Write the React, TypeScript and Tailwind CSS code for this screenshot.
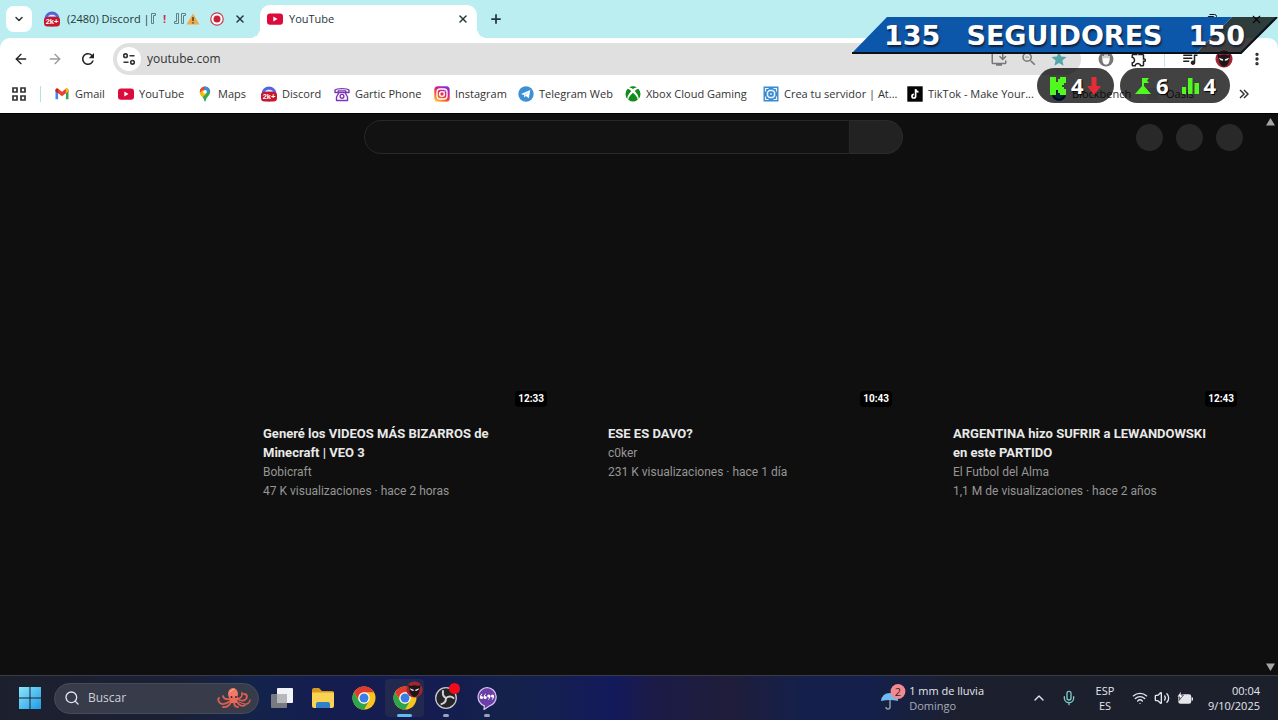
import React from 'react';
import {
  ArrowLeft,
  ArrowRight,
  ChevronDown,
  ChevronUp,
  EllipsisVertical,
  Mic,
  Plus,
  Search,
  Volume2,
  Wifi,
  X,
} from 'lucide-react';
import { MdInstallDesktop, MdOutlineExtension, MdQueueMusic, MdRefresh, MdStar, MdZoomOut } from 'react-icons/md';

const DiscordIcon = () => (
  <svg viewBox="0 0 16 16" className="size-4 shrink-0" aria-hidden="true">
    <circle cx="8" cy="8" r="7.6" fill="#5a62d8" />
    <path d="M4 5.500c1-2.200 7-2.200 8 0z" fill="#e6e8ff" />
    <rect y="6" width="16" height="9.6" rx="3.5" fill="#c9162b" />
    <text x="8" y="13.4" textAnchor="middle" fontSize="7.5" fontWeight="700" fill="#fff" fontFamily="Liberation Sans, sans-serif">
      2k+
    </text>
  </svg>
);

const YouTubeIcon = () => (
  <svg viewBox="0 0 16 16" className="size-4 shrink-0" aria-hidden="true">
    <rect y="2.4" width="16" height="11.4" rx="3" fill="#dd0a3c" />
    <path d="M6.3 5.6v5l4.2-2.5z" fill="#fff" />
  </svg>
);

const GmailIcon = () => (
  <svg viewBox="0 0 16 16" className="size-4 shrink-0" aria-hidden="true">
    <path d="M1.500 4v9.300h2.600V6z" fill="#4285f4" />
    <path d="M14.500 4v9.300h-2.600V6z" fill="#34a853" />
    <path d="M1.500 4c0-1.500 1.700-2 2.700-1.200L8 5.700l3.800-2.900c1-.8 2.700-.3 2.700 1.200v1.300L8 10.200 1.500 5.300z" fill="#ea4335" />
    <path d="M11.900 2.800c1-.8 2.600-.3 2.600 1.200v1.300l-2.600 2z" fill="#fbbc04" />
    <path d="M1.500 4.200c0-1 1-1.700 2-1.600l.6.300v4.400L1.500 5.300z" fill="#c5221f" />
  </svg>
);

const MapsIcon = () => (
  <svg viewBox="0 0 16 16" className="size-4 shrink-0" aria-hidden="true">
    <defs>
      <clipPath id="pin">
        <path d="M8 .6a5.200 5.200 0 0 0-5.200 5.200c0 3.600 3.600 4.800 4.400 8.700.2 1.200 1.400 1.200 1.600 0 .8-3.900 4.400-5.100 4.400-8.700A5.200 5.200 0 0 0 8 .6z" />
      </clipPath>
    </defs>
    <g clipPath="url(#pin)">
      <rect width="16" height="16" fill="#34a853" />
      <path d="M0 0h8l-1 5-5 4H0z" fill="#ea4335" />
      <path d="M7 0h9v5L8 6z" fill="#4285f4" />
      <path d="M1 8l5-4 3 4-5 5z" fill="#fbbc04" />
    </g>
    <circle cx="8" cy="5.800" r="1.900" fill="#fff" />
  </svg>
);

const GarticIcon = () => (
  <svg viewBox="0 0 16 16" className="size-4 shrink-0" fill="none" stroke="#7b35b5" strokeWidth="1.400" strokeLinejoin="round" aria-hidden="true">
    <path d="M1 6.500V4.300C3 2 13 2 15 4.300v2.200h-3.200V4.900H4.200v1.600z" />
    <path d="M5 6.500h6l2.500 4.500v3.500h-11V11z" />
    <circle cx="8" cy="10.300" r="1.900" />
  </svg>
);

const InstagramIcon = () => (
  <svg viewBox="0 0 16 16" className="size-4 shrink-0" aria-hidden="true">
    <defs>
      <linearGradient id="insta" x1="0.200" y1="1" x2="0.800" y2="0">
        <stop offset="0" stopColor="#ffc53d" />
        <stop offset="0.350" stopColor="#f5502f" />
        <stop offset="0.650" stopColor="#d0208b" />
        <stop offset="1" stopColor="#7a2ee0" />
      </linearGradient>
    </defs>
    <rect x="0.300" y="0.300" width="15.400" height="15.400" rx="3.500" fill="url(#insta)" />
    <g fill="none" stroke="#fff" strokeWidth="1.300">
      <rect x="3" y="3" width="10" height="10" rx="3" />
      <circle cx="8" cy="8" r="2.400" />
    </g>
    <circle cx="10.900" cy="5.100" r="0.700" fill="#fff" />
  </svg>
);

const TelegramIcon = () => (
  <svg viewBox="0 0 16 16" className="size-4 shrink-0" aria-hidden="true">
    <circle cx="8" cy="8" r="7.700" fill="#3d8fd6" />
    <path d="M3 7.900l9.300-3.800-1.500 8.200-3-2.200-1.500 1.500-.3-2.500z" fill="#fff" />
    <path d="M6 9.100l4.800-3.500-3.700 4.200z" fill="#b5d5f0" />
  </svg>
);

const XboxIcon = () => (
  <svg viewBox="0 0 16 16" className="size-4 shrink-0" aria-hidden="true">
    <g fill="#138a1c">
      <path d="M4 1.600C5.300.7 6.600.3 8 .3s2.700.4 4 1.300c-1.300-.3-2.700.3-4 1.300-1.300-1-2.700-1.600-4-1.300z" />
      <path d="M2.700 2.700c1 0 2.300.9 3.600 2.400C3.900 7.600 2.200 10.600 2.300 13A7.700 7.700 0 0 1 2.700 2.700z" />
      <path d="M13.300 2.700c-1 0-2.300.9-3.600 2.400 2.400 2.500 4.100 5.500 4 7.900a7.700 7.700 0 0 0-.4-10.300z" />
      <path d="M8 6.700c2.600 2 4.600 5 4.700 7a7.600 7.600 0 0 1-9.400 0c.1-2 2.100-5 4.700-7z" />
    </g>
  </svg>
);

const AternosIcon = () => (
  <svg viewBox="0 0 16 16" className="size-4 shrink-0" aria-hidden="true">
    <rect x="0.500" y="0.500" width="15" height="15" fill="#3c8bd0" />
    <g fill="none" stroke="#e9f4ff">
      <path d="M5.500 2.500h-3v3M10.500 2.500h3v3M5.500 13.500h-3v-3M10.500 13.500h3v-3" strokeWidth="1.200" />
      <path d="M6.300 4.500h3.400l1.800 1.800v3.400l-1.800 1.800H6.300L4.500 9.700V6.300z" strokeWidth="1.500" />
    </g>
    <rect x="7" y="7" width="2" height="2" fill="#a9d0f2" />
  </svg>
);

const TikTokIcon = () => (
  <svg viewBox="0 0 16 16" className="size-4 shrink-0" aria-hidden="true">
    <rect x="0.300" y="0.300" width="15.400" height="15.400" fill="#050505" />
    <path d="M8.600 3v7.200a1.800 1.800 0 1 1-1.800-1.800M8.600 3.200c.2 1.600 1.300 2.600 2.900 2.700" fill="none" stroke="#fff" strokeWidth="1.700" />
  </svg>
);

const BlockbenchIcon = () => (
  <svg viewBox="0 0 16 16" className="size-4 shrink-0" aria-hidden="true">
    <circle cx="8" cy="8" r="7" fill="#0c2b78" />
    <path d="M4 6l4-2 4 2v5l-4 2-4-2z" fill="#1e93d9" />
  </svg>
);

const OasisIcon = () => (
  <svg viewBox="0 0 16 16" className="size-4 shrink-0" aria-hidden="true">
    <rect x="2" y="2" width="12" height="12" rx="3" fill="#e5e7e9" />
  </svg>
);

const ChromeIcon = () => (
  <svg viewBox="0 0 24 24" className="size-6 shrink-0" aria-hidden="true">
    <circle cx="12" cy="12" r="11.500" fill="#f7c51e" />
    <path d="M2.040 6.250A11.500 11.500 0 0 1 21.960 6.250H12A5.750 5.750 0 0 0 7 9.100L6.300 13.600z" fill="#e23b2e" />
    <path d="M2.040 6.250A11.500 11.500 0 0 0 12 23.500l5-8.600a5.750 5.750 0 0 1-9.980 0z" fill="#2da44e" />
    <circle cx="12" cy="12" r="5.750" fill="#fff" />
    <circle cx="12" cy="12" r="4.500" fill="#3b7de8" />
  </svg>
);

const MaskAvatar = ({ className }: { className: string }) => (
  <svg viewBox="0 0 20 20" className={className} aria-hidden="true">
    <circle cx="10" cy="10" r="9.500" fill="#a12633" />
    <path d="M2.500 4.500l3 1.500q4.500-2 9 0l3-1.500-1.500 5q0 7-6 9.500-6-2.500-6-9.500z" fill="#1d1517" />
    <path d="M4.500 8.500l4.500 1.700v1.600q-3.500.4-4.500-3.300zM15.500 8.500L11 10.200v1.600q3.500.4 4.500-3.300z" fill="#f1eeee" />
  </svg>
);

const bookmarks = [
  { label: 'Gmail', icon: <GmailIcon />, width: 'w-[64px]' },
  { label: 'YouTube', icon: <YouTubeIcon />, width: 'w-[79px]' },
  { label: 'Maps', icon: <MapsIcon />, width: 'w-[64px]' },
  { label: 'Discord', icon: <DiscordIcon />, width: 'w-[73px]' },
  { label: 'Gartic Phone', icon: <GarticIcon />, width: 'w-[100px]' },
  { label: 'Instagram', icon: <InstagramIcon />, width: 'w-[84px]' },
  { label: 'Telegram Web', icon: <TelegramIcon />, width: 'w-[107px]' },
  { label: 'Xbox Cloud Gaming', icon: <XboxIcon />, width: 'w-[138px]' },
  { label: 'Crea tu servidor | At...', icon: <AternosIcon />, width: 'w-[144px]' },
  { label: 'TikTok - Make Your...', icon: <TikTokIcon />, width: 'w-[144px]' },
  { label: 'Blockbench', icon: <BlockbenchIcon />, width: 'w-[94px]' },
  { label: 'Oasis', icon: <OasisIcon />, width: 'w-[60px]' },
];

const videos = [
  { title: 'Generé los VIDEOS MÁS BIZARROS de Minecraft | VEO 3', channel: 'Bobicraft', meta: '47 K visualizaciones · hace 2 horas', time: '12:33' },
  { title: 'ESE ES DAVO?', channel: 'c0ker', meta: '231 K visualizaciones · hace 1 día', time: '10:43' },
  { title: 'ARGENTINA hizo SUFRIR a LEWANDOWSKI en este PARTIDO', channel: 'El Futbol del Alma', meta: '1,1 M de visualizaciones · hace 2 años', time: '12:43' },
];

function Tabs() {
  return (
    <div role="tablist" className="flex h-[38px] shrink-0 items-center bg-[#bbeef0] pl-[6px] text-[#26363a]">
      <button aria-label="Buscar pestañas" className="flex size-[26px] items-center justify-center rounded-lg bg-white">
        <ChevronDown className="size-3" strokeWidth={3} />
      </button>
      <div role="tab" aria-selected="false" className="flex w-[228px] items-center pr-[14px] pl-3">
        <DiscordIcon />
        <span className="ml-[7px] flex h-4 w-[131px] shrink-0 items-center whitespace-nowrap">
          <span>(2480) Discord |</span>
          <svg viewBox="0 0 6 12" className="h-3 w-[6px] shrink-0 text-[#5f8086]" fill="none" stroke="currentColor" role="img" aria-label="『">
            <path d="M5.500 2.500h-2v8h-2v-10h4z" />
          </svg>
          <span className="w-[18px] shrink-0 text-center font-bold text-[#d02a4d]">!</span>
          <svg viewBox="0 0 12 12" className="h-3 w-3 shrink-0 text-[#5f8086]" fill="none" stroke="currentColor" role="img" aria-label="』『">
            <path d="M.5 8.500h2v-8h2v10h-4zM11.500 2.500h-2v8h-2v-10h4z" />
          </svg>
          <svg viewBox="0 0 14 12" className="h-3 w-[14px] shrink-0" role="img" aria-label="⚠">
            <path d="M7 .5l6.500 11H.5z" fill="#efa94a" />
            <path d="M7 4v4M7 9.200v1.300" stroke="#3d3424" strokeWidth="1.400" />
          </svg>
        </span>
        <svg viewBox="0 0 14 14" className="ml-3 size-[14px] shrink-0" role="img" aria-label="Grabando">
          <circle cx="7" cy="7" r="6.200" fill="#fff" stroke="#c63b4c" strokeWidth="1.200" />
          <circle cx="7" cy="7" r="3.500" fill="#c5223a" />
        </svg>
        <button aria-label="Cerrar Discord" className="ml-auto">
          <X className="size-3" strokeWidth={3} />
        </button>
      </div>
      <div role="tab" aria-selected="true" className="relative mt-[5px] flex h-[33px] w-[217px] items-center rounded-t-[10px] bg-white pr-2 pb-[5px] pl-[7px]">
        <span className="absolute bottom-0 -left-[10px] size-[10px] bg-[radial-gradient(circle_at_0_0,#bbeef0_10px,#ffffff_10px)]" />
        <span className="absolute -right-[10px] bottom-0 size-[10px] bg-[radial-gradient(circle_at_100%_0,#bbeef0_10px,#ffffff_10px)]" />
        <YouTubeIcon />
        <span className="ml-[6px]">YouTube</span>
        <button aria-label="Cerrar YouTube" className="ml-auto">
          <X className="size-3" strokeWidth={3} />
        </button>
      </div>
      <button aria-label="Nueva pestaña" className="ml-3">
        <Plus className="size-[14px]" strokeWidth={3} />
      </button>
      <div className="mr-[15px] ml-auto flex items-center gap-8 text-[#111]">
        <svg viewBox="0 0 12 12" className="size-3" fill="none" stroke="currentColor" role="img" aria-label="Restaurar">
          <rect x="1.500" y="3.500" width="7" height="7" rx="1.500" />
          <path d="M3.500 1.500h5q2 0 2 2v5" />
        </svg>
        <button aria-label="Cerrar ventana">
          <X className="size-[13px]" strokeWidth={2} />
        </button>
      </div>
    </div>
  );
}

function Toolbar() {
  return (
    <div className="shrink-0 bg-[#bbeef0]">
      <div className="flex h-[42px] items-center rounded-t-[10px] bg-white px-[13px] text-[#222]">
        <button aria-label="Atrás" className="mr-[18px]"><ArrowLeft className="size-4" strokeWidth={2} /></button>
        <button aria-label="Adelante" className="mr-4 text-[#9b9b9b]"><ArrowRight className="size-4" strokeWidth={2} /></button>
        <button aria-label="Recargar" className="mr-4"><MdRefresh className="size-[18px]" /></button>
        <div className="flex h-8 min-w-0 flex-1 items-center rounded-full bg-[#e0e0e0] pr-[13px] pl-1">
          <button aria-label="Información del sitio" className="flex size-6 shrink-0 items-center justify-center rounded-full bg-white">
            <svg viewBox="0 0 14 14" className="size-[14px]" fill="none" stroke="#333" strokeWidth="1.600">
              <circle cx="3.500" cy="3.700" r="1.800" />
              <path d="M7.500 3.700h5M1.500 10.300h5" />
              <circle cx="10.500" cy="10.300" r="1.800" />
            </svg>
          </button>
          <input aria-label="Dirección" defaultValue="youtube.com" className="ml-[6px] min-w-0 flex-1 bg-transparent text-[12px] text-[#333] outline-none" />
          <div className="flex items-center gap-3 text-[#777]">
            <MdInstallDesktop className="size-[18px]" />
            <MdZoomOut className="size-[18px]" />
            <MdStar className="size-[18px] text-[#55a5a8]" />
          </div>
        </div>
        <div className="ml-[17px] flex items-center gap-4">
          <svg viewBox="0 0 16 16" className="size-4" role="img" aria-label="Bloqueador">
            <circle cx="8" cy="8" r="7.500" fill="#777" />
            <path d="M5 8.500V5M7 8V3.500M9 8V3.500M11 9V5M5 8q0 5 3 5t3-5z" stroke="#fff" strokeWidth="1.300" fill="#fff" />
          </svg>
          <MdOutlineExtension className="size-[18px]" />
          <span className="h-4 w-px bg-[#c8e4e6]" />
          <MdQueueMusic className="size-[18px]" />
          <MaskAvatar className="size-[18px]" />
          <button aria-label="Menú"><EllipsisVertical className="size-4" strokeWidth={3} /></button>
        </div>
      </div>
      <nav aria-label="Marcadores" className="flex h-[33px] items-center bg-white pb-[5px] pl-3">
        <svg viewBox="0 0 14 14" className="size-[14px] shrink-0" fill="none" stroke="#333" strokeWidth="1.700" role="img" aria-label="Aplicaciones">
          <path d="M1 1h4v4H1zM9 1h4v4H9zM1 9h4v4H1zM9 9h4v4H9z" />
        </svg>
        <span className="ml-[14px] h-4 w-px shrink-0 bg-[#b9dfe2]" />
        <div className="ml-[13px] flex min-w-0 flex-1">
          {bookmarks.map((b) => (
            <a key={b.label} href="#" className={`flex shrink-0 items-center gap-[5px] whitespace-nowrap text-[#333] ${b.width}`}>
              {b.icon}
              <span>{b.label}</span>
            </a>
          ))}
        </div>
        <button aria-label="Más marcadores" className="mr-[29px]">
          <svg viewBox="0 0 10 10" className="size-[10px]" fill="none" stroke="#333" strokeWidth="1.500">
            <path d="M1 1l4 4-4 4M5 1l4 4-4 4" />
          </svg>
        </button>
      </nav>
    </div>
  );
}

function Page() {
  return (
    <main className="flex min-h-0 flex-1 border-t border-black bg-[#0f0f0f] font-[Roboto,sans-serif]">
      <div className="min-w-0 flex-1">
        <header className="flex h-[46px] items-center justify-end pr-[20px]">
          <div className="mr-[233px] flex h-[34px] w-[539px]">
            <input aria-label="Buscar en YouTube" className="min-w-0 flex-1 rounded-l-full border border-[#282828] bg-[#121212] outline-none" />
            <button aria-label="Buscar" className="w-[53px] rounded-r-full border border-l-0 border-[#2b2b2b] bg-[#222]" />
          </div>
          <div className="flex gap-[13px]">
            <span className="size-[27px] rounded-full bg-[#292929]" />
            <span className="size-[27px] rounded-full bg-[#292929]" />
            <span className="size-[27px] rounded-full bg-[#292929]" />
          </div>
        </header>
        <div className="grid grid-cols-3 gap-x-[16px] pr-[19px] pl-[225px]">
          {videos.map((v) => (
            <article key={v.title} className="text-[12px] leading-[19px] text-[#969696]">
              <div className="flex h-[252px] items-end justify-end pr-[7px] pb-[5px]">
                <span className="rounded bg-black px-[3px] text-[10px] leading-4 font-bold text-white">{v.time}</span>
              </div>
              <div className="pt-[12px] pr-[28px] pl-[38px]">
                <h3 className="pb-px text-[13px] leading-[19px] font-bold text-[#e9e9e9]">{v.title}</h3>
                <p className="whitespace-nowrap">{v.channel}</p>
                <p className="whitespace-nowrap">{v.meta}</p>
              </div>
            </article>
          ))}
        </div>
      </div>
      <div className="flex w-[15px] shrink-0 flex-col items-center justify-between py-[4px]">
        <svg viewBox="0 0 9 8" className="h-2 w-[9px]"><path d="M4.500 0L9 7.500H0z" fill="#a5a5a5" /></svg>
        <svg viewBox="0 0 9 8" className="h-2 w-[9px]"><path d="M4.500 8L0 .5h9z" fill="#a5a5a5" /></svg>
      </div>
    </main>
  );
}

function Taskbar() {
  return (
    <footer className="flex h-[45px] shrink-0 items-center border-t border-[#3a3b45] bg-[linear-gradient(90deg,#1c202e_0%,#1b2035_14%,#13234b_20%,#151c50_26%,#141c50_34%,#14224b_40%,#131a5b_48%,#1c1b48_51%,#1f1d3a_57%,#14204b_63%,#14204b_68%,#1c202e_75%,#1c202c_100%)] pl-[19px] text-[#e4e6ec]">
      <button aria-label="Inicio" className="mr-[13px]">
        <svg viewBox="0 0 22 22" className="size-[22px]">
          <defs>
            <linearGradient id="win" x1="0" y1="0" x2="1" y2="1">
              <stop offset="0" stopColor="#8be6fb" />
              <stop offset="1" stopColor="#1f9be6" />
            </linearGradient>
          </defs>
          <path d="M0 0h10.500v10.500H0zM11.500 0H22v10.500H11.500zM0 11.500h10.500V22H0zM11.500 11.500H22V22H11.500z" fill="url(#win)" />
        </svg>
      </button>
      <label className="flex h-[31px] w-[205px] items-center rounded-full border border-[#474b5a] bg-[#373b4a] pr-[6px] pl-[9px]">
        <Search className="size-4 shrink-0" strokeWidth={2} />
        <input aria-label="Buscar" placeholder="Buscar" className="ml-2 min-w-0 flex-1 bg-transparent text-[12px] outline-none placeholder:text-[#ced0d8]" />
        <svg viewBox="0 0 36 22" className="h-[22px] w-9 shrink-0" fill="none" strokeLinecap="round">
          <g stroke="#d9604f" strokeWidth="1.800">
            <path d="M14 14Q8 19 4 16Q1 13 3 11" />
            <path d="M15 15Q12 21 7 20" />
            <path d="M18 15Q18 20 22 20" />
            <path d="M20 14Q25 21 29 18" />
            <path d="M21 12Q29 16 31 10Q31 7 28 7" />
            <path d="M21 12Q27 11 26 6" />
            <path d="M14 12Q8 13 7 9" />
            <path d="M23 15Q33 20 34 13" strokeWidth="1.300" />
          </g>
          <ellipse cx="17" cy="7" rx="5" ry="6" fill="#f07a66" />
          <path d="M13 10h9l-1 6h-6z" fill="#e9695a" />
          <circle cx="15.500" cy="10" r="1" fill="#48222b" />
          <circle cx="20" cy="10" r="1" fill="#48222b" />
          <path d="M14 5q2-3 4-3" stroke="#ffb19d" />
        </svg>
      </label>
      <div className="ml-[2px] flex items-center">
        <button aria-label="Vista de tareas" className="flex h-[38px] w-[41px] items-center justify-center">
          <svg viewBox="0 0 24 22" className="h-[22px] w-6">
            <rect x="7" y="1" width="16" height="15" rx="1" fill="#f2f3f6" />
            <rect x="1" y="7" width="16" height="14" rx="1" fill="#777a80" />
            <path d="M7 7h10v9H7z" fill="#b7b8bb" />
          </svg>
        </button>
        <button aria-label="Explorador de archivos" className="flex h-[38px] w-[41px] items-center justify-center">
          <svg viewBox="0 0 24 22" className="h-[22px] w-6">
            <path d="M1 3q0-2 2-2h5l3 3h10q2 0 2 2v4H1z" fill="#d69b21" />
            <path d="M1 5.500h22V19q0 2-2 2H3q-2 0-2-2z" fill="#fbd354" />
            <path d="M5 21v-4q0-2 2-2h10q2 0 2 2v4z" fill="#2f80c6" />
          </svg>
        </button>
        <button aria-label="Chrome" className="flex h-[38px] w-[41px] items-center justify-center"><ChromeIcon /></button>
        <button aria-label="Chrome, perfil" className="relative mx-[1px] flex h-[38px] w-[39px] items-center justify-center rounded bg-[#22294f]">
          <ChromeIcon />
          <MaskAvatar className="absolute top-[2px] right-[1px] size-[17px]" />
          <span className="absolute bottom-0 h-[3px] w-[15px] rounded-full bg-[#60bcf0]" />
        </button>
        <button aria-label="OBS" className="relative flex h-[38px] w-[41px] items-center justify-center">
          <svg viewBox="0 0 24 24" className="size-6">
            <circle cx="12" cy="12" r="10.300" fill="#252427" stroke="#c7c8cf" strokeWidth="1.300" />
            <g fill="none" stroke="#d3d3d8" strokeWidth="2" strokeLinecap="round">
              <path d="M12 12Q8 10 9 5" />
              <path d="M12 12Q16 9 19.500 12" />
              <path d="M12 12Q12 17 7.500 18" />
            </g>
          </svg>
          <span className="absolute top-[4px] right-[6px] size-[11px] rounded-full bg-[#f40a18]" />
          <span className="absolute bottom-0 h-[3px] w-[6px] rounded-full bg-[#9da1b8]" />
        </button>
        <button aria-label="Chat" className="relative flex h-[38px] w-[41px] items-center justify-center">
          <svg viewBox="0 0 24 24" className="size-6">
            <path d="M12 1.500a9.500 9.500 0 0 1 2 18.700L9 23.500l.3-3.600A9.500 9.500 0 0 1 12 1.500z" fill="#6b3fa8" stroke="#d9c9f0" strokeWidth="1.200" />
            <g fill="#fff">
              <circle cx="6.500" cy="11.500" r="1.600" /><circle cx="10.200" cy="11.500" r="1.600" />
              <circle cx="13.800" cy="10" r="1.600" /><circle cx="17.500" cy="10" r="1.600" />
            </g>
            <path d="M5.400 11.500q0-3 1.700-3.500M9.100 11.500q0-3 1.700-3.500M14.900 10q0 3-1.700 3.500M18.600 10q0 3-1.700 3.500" fill="none" stroke="#fff" />
          </svg>
          <span className="absolute bottom-0 h-[3px] w-[6px] rounded-full bg-[#9da1b8]" />
        </button>
      </div>
      <div className="mr-[47px] ml-auto flex items-center">
        <svg viewBox="0 0 28 28" className="h-7 w-7">
          <path d="M2 17Q3 9 11 9t8 8q-8-2-17 0z" fill="#6fbcf0" />
          <path d="M11 16v7q0 2-2 2t-2-2" fill="none" stroke="#8f98a8" strokeWidth="1.500" />
          <circle cx="19" cy="7.500" r="7.400" fill="#f28b8f" />
          <text x="19" y="11.500" textAnchor="middle" fontSize="11" fill="#3a1e25" fontFamily="Open Sans, sans-serif">2</text>
        </svg>
        <p className="ml-[2px] text-[11px] leading-[15px] whitespace-nowrap">
          1 mm de lluvia<br /><span className="text-[#a9acb8]">Domingo</span>
        </p>
      </div>
      <div className="flex items-center pr-[18px] text-[11px] leading-[15px]">
        <ChevronUp className="size-4" strokeWidth={2} />
        <Mic className="ml-[14px] size-4 text-[#7ec9c8]" strokeWidth={2} />
        <p className="ml-[17px] w-[22px] text-center">ESP<br />ES</p>
        <Wifi className="ml-[16px] size-4" strokeWidth={2} />
        <Volume2 className="ml-[6px] size-4" strokeWidth={2} />
        <svg viewBox="0 0 16 14" className="ml-[7px] h-[14px] w-4" role="img" aria-label="Batería">
          <rect x="2" y="4" width="11.500" height="8" rx="1.500" fill="#e4e6ec" stroke="#e4e6ec" strokeWidth="1.500" />
          <path d="M15.300 6.500v3" stroke="#e4e6ec" strokeWidth="1.400" />
          <path d="M4 0L0 6h3L2 9.500 6.500 4H4z" fill="#fff" stroke="#1c202c" strokeWidth="0.700" />
        </svg>
        <p className="ml-[11px] w-[56px] text-right">00:04<br />9/10/2025</p>
      </div>
    </footer>
  );
}

function Overlay() {
  return (
    <aside className="pointer-events-none absolute top-[17px] right-0 h-[87px] w-[426px]">
      <div className="relative h-[37px] text-white">
        <svg viewBox="0 0 426 37" className="absolute inset-0 h-[37px] w-[426px]">
          <path d="M380 0H425L389 36H344z" fill="#000" fillOpacity="0.750" />
          <path d="M35 0H380L344 36H0z" fill="#0d57ab" />
          <path d="M0 36H389L425 0" fill="none" stroke="#06101b" strokeWidth="2" />
        </svg>
        <div className="relative flex h-[37px] items-center justify-between pt-[2px] pr-[33px] pl-[32px] font-['DejaVu_Sans',sans-serif] text-[27px] font-bold [text-shadow:1px_2px_2px_#10203a]">
          <span>135</span>
          <span>SEGUIDORES</span>
          <span>150</span>
        </div>
      </div>
      <div className="mt-[14px] mr-[48px] flex justify-end gap-[6px] text-[22px] font-bold text-white [text-shadow:1px_1px_1px_#000]">
        <div className="flex h-[35px] w-[77px] items-center rounded-full bg-black/74 pl-[13px]">
          <svg viewBox="0 0 16 18" className="h-[18px] w-4"><path d="M0 0h6v5h2V2h2V0h6v6h-2v2h-2v2h2v2h2v6h-6v-2H8v-3H6v5H0z" fill="#50fa1e" /></svg>
          <span className="ml-[5px]">4</span>
          <svg viewBox="0 0 14 18" className="ml-[3px] h-[18px] w-[14px]"><path d="M4.500 0h5v9H14l-7 9-7-9h4.500z" fill="#e52b35" /></svg>
        </div>
        <div className="flex h-[35px] w-[110px] items-center rounded-full bg-black/74 pl-[14px]">
          <svg viewBox="0 0 18 18" className="h-[18px] w-[18px]" fill="#50fa1e"><path d="M8 1h7l-2 2.500L15 6h-5v3l7 8H1l7-8z" /></svg>
          <span className="ml-1">6</span>
          <svg viewBox="0 0 17 18" className="ml-[13px] h-[18px] w-[17px]" fill="#50fa1e"><path d="M0 10h4v7H0zM6 1h4.500v16H6zM12.500 6H17v11h-4.500z" /></svg>
          <span className="ml-[5px]">4</span>
        </div>
      </div>
    </aside>
  );
}

export default function App() {
  return (
    <div className="relative flex h-screen flex-col overflow-hidden bg-[#0f0f0f] font-['Open_Sans',sans-serif] text-[11px]">
      <Tabs />
      <Toolbar />
      <Page />
      <Taskbar />
      <Overlay />
    </div>
  );
}
